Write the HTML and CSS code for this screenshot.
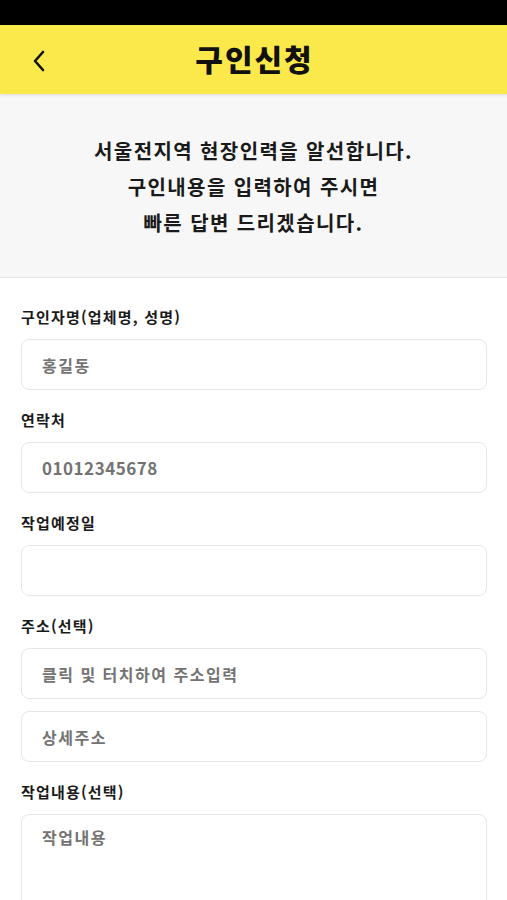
FILE: index.html
```html
<!DOCTYPE html>
<html lang="ko">
<head>
<meta charset="utf-8">
<link rel="stylesheet" href="styles.css">
</head>
<body>
<div class="statusbar"></div>
<header class="appbar">
  <button class="back" aria-label="뒤로">
    <svg width="14" height="22" viewBox="0 0 14 22"><path d="M11 2 L3 11 L11 20" fill="none" stroke="#111" stroke-width="2.6" stroke-linecap="round" stroke-linejoin="round"/></svg>
  </button>
  <h1 class="title">구인신청</h1>
</header>
<section class="intro">
  <p>서울전지역 현장인력을 알선합니다.<br>구인내용을 입력하여 주시면<br>빠른 답변 드리겠습니다.</p>
</section>
<form class="form">
  <div class="field">
    <label class="label">구인자명(업체명, 성명)</label>
    <div class="input">홍길동</div>
  </div>
  <div class="field">
    <label class="label">연락처</label>
    <div class="input num">01012345678</div>
  </div>
  <div class="field">
    <label class="label">작업예정일</label>
    <div class="input"></div>
  </div>
  <div class="field">
    <label class="label">주소(선택)</label>
    <div class="input">클릭 및 터치하여 주소입력</div>
    <div class="input">상세주소</div>
  </div>
  <div class="field">
    <label class="label">작업내용(선택)</label>
    <div class="input textarea">작업내용</div>
  </div>
</form>
</body>
</html>
```
FILE: styles.css
```css
* { box-sizing: border-box; }
html, body { margin: 0; padding: 0; }
body {
  width: 507px;
  height: 900px;
  overflow: hidden;
  background: #fff;
  font-family: "Noto Sans CJK KR", "Noto Sans", sans-serif;
  color: #111;
}
.statusbar { height: 25px; background: #000; }
.appbar {
  position: relative;
  height: 69px;
  background: #fbe94b;
  display: flex;
  align-items: center;
  justify-content: center;
  box-shadow: 0 1px 3px rgba(0,0,0,0.12);
  z-index: 1;
}
.back {
  position: absolute;
  left: 32px;
  top: 25px;
  border: 0;
  background: none;
  padding: 0;
  display: flex;
}
.title {
  margin: 0;
  font-size: 30px;
  font-weight: 900;
  line-height: 1;
  letter-spacing: 2px;
  color: #111;
  transform: translate(1px, -2px);
}
.intro {
  background: #f7f7f7;
  border-bottom: 1px solid #e3e3e3;
  height: 184px;
  display: flex;
  align-items: center;
  justify-content: center;
}
.intro p {
  margin: 0;
  text-align: center;
  font-size: 20px;
  font-weight: 700;
  line-height: 36px;
  letter-spacing: 1.4px;
  color: #1a1a1a;
  transform: translateY(1px);
}
.form {
  padding: 29px 20px 0 21px;
  display: flex;
  flex-direction: column;
  gap: 20px;
}
.field {
  display: flex;
  flex-direction: column;
  gap: 12px;
}
.label {
  font-size: 15px;
  font-weight: 700;
  line-height: 20px;
  letter-spacing: 1.2px;
  color: #1a1a1a;
}
.input {
  height: 51px;
  border: 1px solid #e6e6e6;
  border-radius: 8px;
  padding: 0 20px;
  display: flex;
  align-items: center;
  font-size: 16px;
  font-weight: 700;
  letter-spacing: 1.5px;
  color: #737373;
}
.input.num { letter-spacing: 0.5px; font-size: 17px; }
.textarea {
  height: 120px;
  align-items: flex-start;
  padding-top: 10px;
}
```
